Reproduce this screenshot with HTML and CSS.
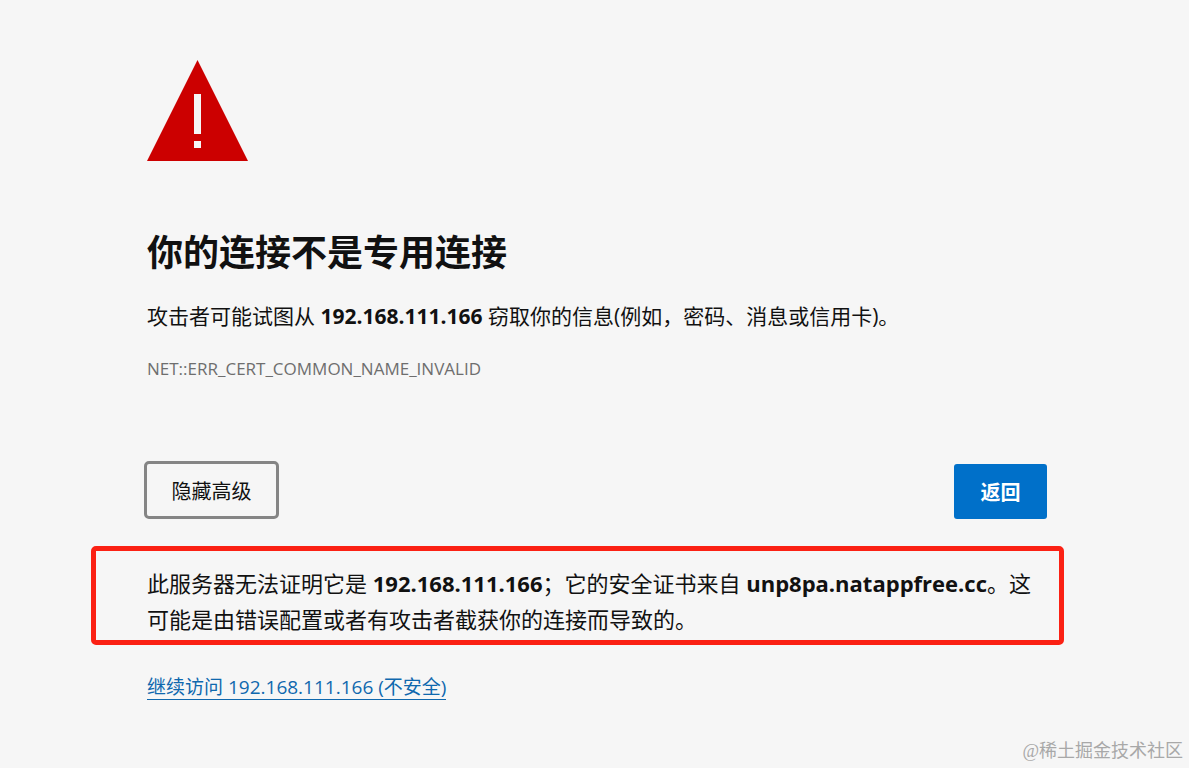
FILE: index.html
```html
<!DOCTYPE html>
<html lang="zh-CN">
<head>
    <meta charset="UTF-8">
    <meta name="viewport" content="width=device-width, initial-scale=1.0">
    <title>隐私错误</title>
    <link rel="stylesheet" href="styles.css">
</head>
<body>
    <main class="container">
        <svg class="warning-icon" viewBox="0 0 101 101" aria-hidden="true">
            <path fill="#cc0000" d="M50.500 0L101 101H0Z"/>
            <path fill="#f6f6f6" d="M47 34h7v40h-7zM47 81h7v7h-7z"/>
        </svg>

        <h1>你的连接不是专用连接</h1>
        <p class="summary">攻击者可能试图从 <strong>192.168.111.166</strong> 窃取你的信息(例如，密码、消息或信用卡)。</p>
        <p class="error-code">NET::ERR_CERT_COMMON_NAME_INVALID</p>

        <div class="buttons">
            <button type="button" class="btn details-btn">隐藏高级</button>
            <button type="button" class="btn back-btn">返回</button>
        </div>

        <!-- Advanced details -->
        <section class="details">
            <p>此服务器无法证明它是 <strong>192.168.111.166</strong>；它的安全证书来自 <strong>unp8pa.natappfree.cc</strong>。这可能是由错误配置或者有攻击者截获你的连接而导致的。</p>
        </section>
        <a class="proceed-link" href="#">继续访问 192.168.111.166 (不安全)</a>
    </main>

    <div class="watermark">@稀土掘金技术社区</div>
</body>
</html>
```

FILE: styles.css
```css
* {
    box-sizing: border-box;
}

body {
    margin: 0;
    background-color: #f6f6f6;
    color: #111;
    font-family: "Open Sans", "Noto Sans CJK SC", sans-serif;
}

.container {
    max-width: 900px;
    margin: 0 142px 0 147px;
    padding-top: 60px;
}

.warning-icon {
    display: block;
    width: 101px;
    height: 101px;
}

h1 {
    margin: 64px 0 0;
    font-size: 36px;
    line-height: 56px;
    font-weight: 700;
}

.summary {
    margin: 19px 0 0;
    font-size: 21px;
    line-height: 32px;
}

.error-code {
    margin: 24px 0 0;
    color: #6e6e6e;
    font-size: 17px;
    line-height: 26px;
}

.buttons {
    display: flex;
    justify-content: space-between;
    align-items: flex-end;
    margin: 79px 0 0 -3px;
}

.btn {
    font-family: inherit;
    font-size: 20px;
    color: #111;
    cursor: pointer;
}

.details-btn {
    min-width: 135px;
    height: 58px;
    padding: 10px 20px;
    background-color: #f6f6f6;
    border: 3px solid #858585;
    border-radius: 5px;
}

.back-btn {
    min-width: 93px;
    height: 55px;
    padding: 10px 20px;
    background-color: #0070c9;
    border: none;
    border-radius: 3px;
    color: #fff;
    font-weight: 700;
}

.details {
    margin: 27px -17px 0 -56px;
    padding: 14px 12px 3px 51px;
    border: 5px solid #fb2114;
    border-radius: 5px;
}

.details p {
    margin: 0;
    font-size: 22px;
    line-height: 36px;
}

.proceed-link {
    display: inline-block;
    margin-top: 30px;
    border-bottom: 1px solid #0f68ae;
    color: #0f68ae;
    font-size: 19px;
    line-height: 24px;
    text-decoration: none;
}

.watermark {
    position: absolute;
    right: 6px;
    bottom: 4px;
    color: #a8a8a8;
    font-family: "Liberation Serif", "Noto Sans CJK SC", serif;
    font-size: 18px;
    line-height: 26px;
}
```
